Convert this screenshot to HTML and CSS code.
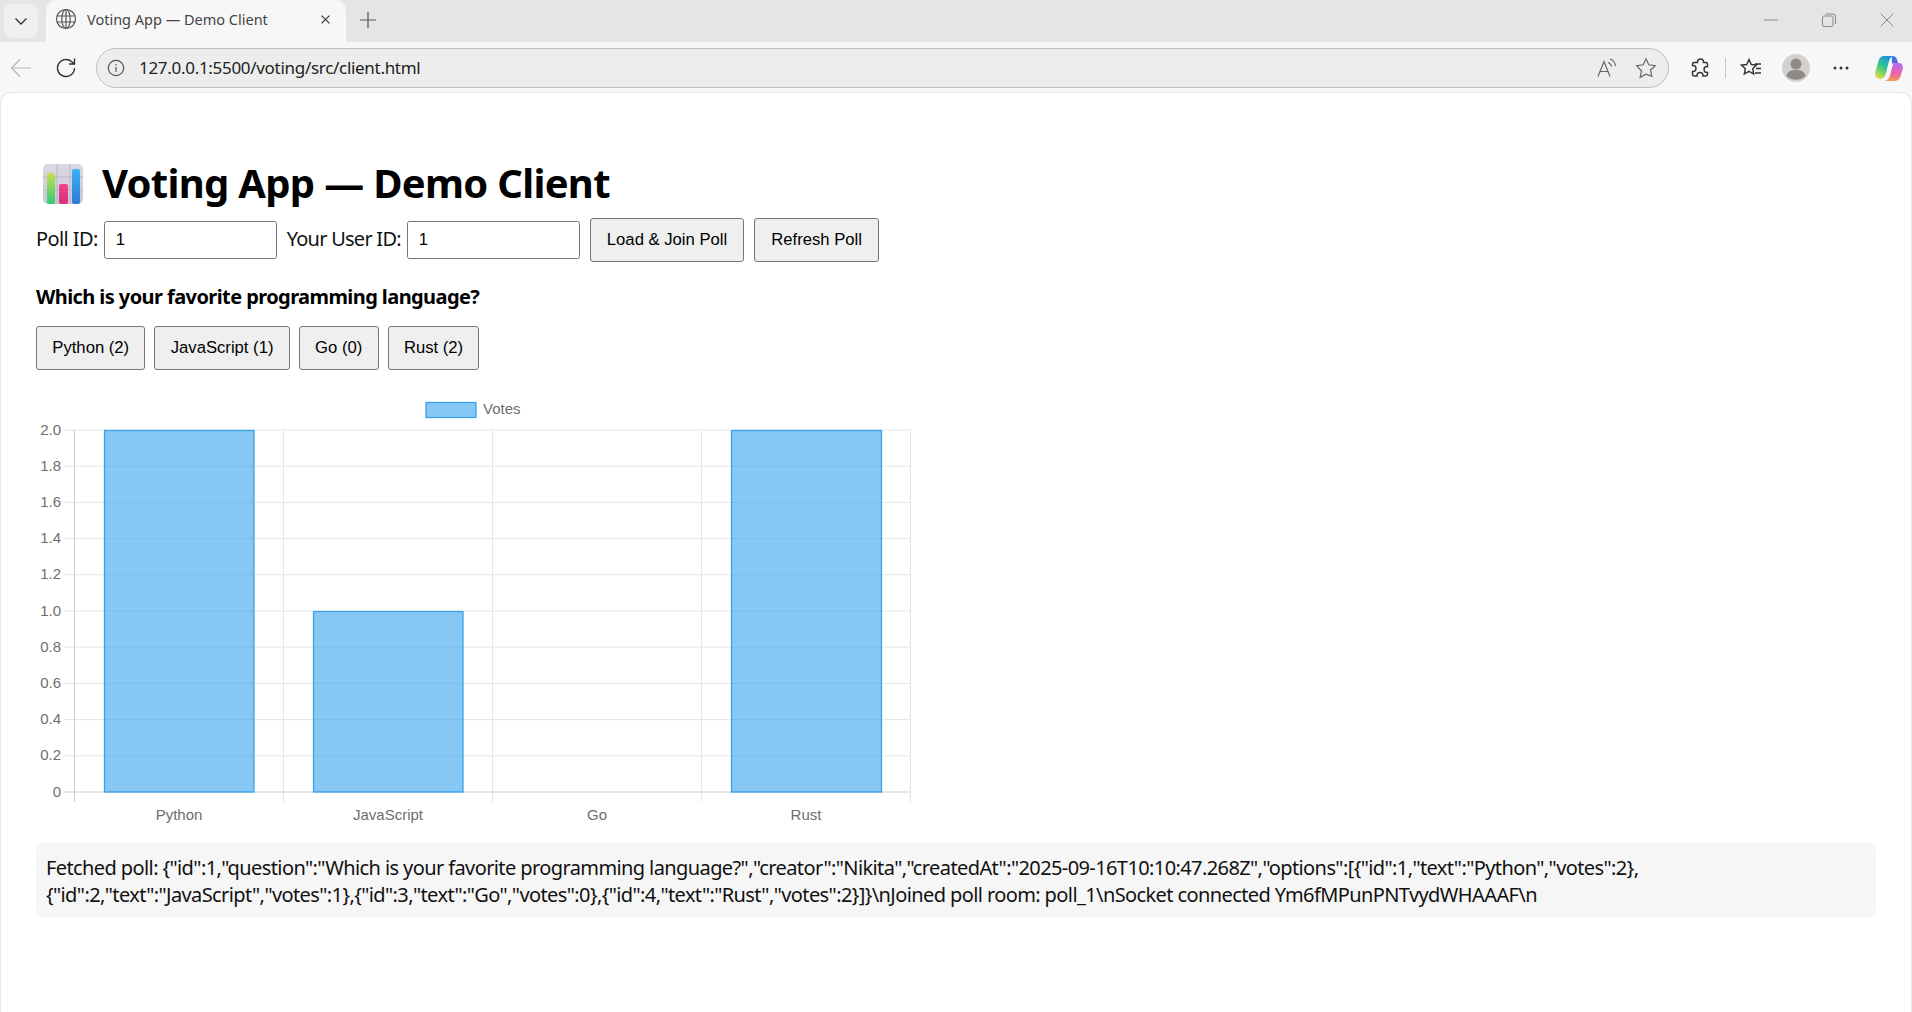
FILE: index.html
```html
<!DOCTYPE html>
<html lang="en">
<head>
<meta charset="utf-8">
<title>Voting App — Demo Client</title>
<link rel="stylesheet" href="styles.css">
</head>
<body>
<div class="browser">
  <header class="tabstrip">
    <button class="tab-menu" aria-label="Tab actions">
      <svg width="16" height="16" viewBox="0 0 16 16" class="ico"><path d="M2.5 5.500 8 11l5.500-5.500"/></svg>
    </button>
    <div class="tab">
      <svg width="22" height="22" viewBox="0 0 22 22" class="ico globe"><circle cx="11" cy="11" r="9.500"/><ellipse cx="11" cy="11" rx="4.200" ry="9.500"/><path d="M11 1.500v19M2 8h18M2 14h18"/></svg>
      <span class="tab-title">Voting App — Demo Client</span>
      <svg width="14" height="14" viewBox="0 0 14 14" class="ico tab-close"><path d="M2 2l10 10M12 2 2 12"/></svg>
    </div>
    <svg width="16" height="16" viewBox="0 0 16 16" class="ico new-tab"><path d="M8 0v16M0 8h16"/></svg>
    <div class="win-controls">
      <svg width="14" height="14" viewBox="0 0 14 14" class="ico win"><path d="M0 7h14"/></svg>
      <svg width="14" height="14" viewBox="0 0 14 14" class="ico win"><rect x=".5" y="3" width="10.500" height="10.500" rx="1.500"/><path d="M3.500 1h7.500a2.500 2.500 0 0 1 2.500 2.500V11"/></svg>
      <svg width="14" height="14" viewBox="0 0 14 14" class="ico win"><path d="M.5.500l13 13M13.500.500l-13 13"/></svg>
    </div>
  </header>
  <nav class="toolbar">
    <svg width="22" height="20" viewBox="0 0 22 20" class="ico back"><path d="M21 10H1.500M10 1.500 1.500 10l8.500 8.500"/></svg>
    <svg width="22" height="22" viewBox="0 0 22 22" class="ico reload"><path d="M19.500 11a8.500 8.500 0 1 1-2.700-6.200L19.500 7M19.500 1.500V7H14"/></svg>
    <div class="address">
      <svg width="18" height="18" viewBox="0 0 18 18" class="ico info"><circle cx="9" cy="9" r="7.700"/><path d="M9 8v5M9 5v1.500"/></svg>
      <span class="url">127.0.0.1:5500/voting/src/client.html</span>
      <span class="spacer"></span>
      <svg width="20" height="20" viewBox="0 0 20 20" class="ico grey"><path d="M1 18.500 7 3.500l6 15M3 13.500h8M11 4.500c2 .7 3.300 2 3.600 4M13 1c3 1 5 3.500 5.500 7"/></svg>
      <svg width="22" height="22" viewBox="0 0 22 22" class="ico grey star"><path d="M11 1.800l2.800 6 6.500.8-4.800 4.400 1.300 6.400L11 17.200l-5.800 3.200 1.300-6.400L1.700 8.600l6.500-.8z"/></svg>
    </div>
    <svg width="20" height="20" viewBox="0 0 20 20" class="ico puzzle"><path d="M7.500 4a3 3 0 0 1 6 0v.5H16a1.500 1.500 0 0 1 1.500 1.500v2.500H17a3 3 0 0 0 0 6h.5v1.500A2 2 0 0 1 15.500 18H13v-.5a3 3 0 0 0-6 0v.5H4.500a2 2 0 0 1-2-2v-2.500H3a3 3 0 0 0 0-6h-.5V6A1.500 1.500 0 0 1 4 4.500h3.500z"/></svg>
    <span class="tool-sep"></span>
    <svg width="22" height="22" viewBox="0 0 22 22" class="ico fav"><path d="M9 2.500l2.300 5 5.200.6-3.800 3.600 1 5.300L9 14.300 4.300 17l1-5.300L1.500 8.100l5.200-.6zM15 7h6M16 11.500h5M15 16h6"/></svg>
    <svg width="28" height="28" viewBox="0 0 28 28" class="avatar"><circle cx="14" cy="14" r="14" fill="#d3d1cd"/><circle cx="14" cy="10" r="5.500" fill="#8f8a85"/><path d="M4.500 22c1-4.500 4.500-6 9.500-6s8.500 1.500 9.500 6a14 14 0 0 1-19 0z" fill="#8f8a85"/></svg>
    <svg width="16" height="4" viewBox="0 0 16 4" class="dots"><circle cx="2" cy="2" r="1.500"/><circle cx="8" cy="2" r="1.500"/><circle cx="14" cy="2" r="1.500"/></svg>
    <svg width="28" height="26" viewBox="0 0 28 26" class="copilot">
      <defs>
        <linearGradient id="cpa" x1="0.700" y1="0" x2="0.200" y2="1"><stop offset="0" stop-color="#1a8fe6"/><stop offset=".5" stop-color="#34c98a"/><stop offset="1" stop-color="#e6dc3c"/></linearGradient>
        <linearGradient id="cpb" x1="0.600" y1="0" x2="0.400" y2="1"><stop offset="0" stop-color="#b06cf0"/><stop offset=".55" stop-color="#ee62a8"/><stop offset="1" stop-color="#f59a4a"/></linearGradient>
        <linearGradient id="cpc" x1="0" y1="0" x2="1" y2="1"><stop offset="0" stop-color="#1a7fe0"/><stop offset="1" stop-color="#7a5ce8"/></linearGradient>
      </defs>
      <path d="M17 1c3 0 4.500 1.500 5.200 4l1 3.500H17z" fill="url(#cpc)"/>
      <path d="M9 1h10c-3 .5-4.500 3-5.300 6L11 18c-.8 3.500-3 6-6 6-4 0-5.500-3.500-4.500-7.500L3.500 6C4.300 3 6 1 9 1z" fill="url(#cpa)"/>
      <path d="M19.500 8h4.500c3 0 4.500 3 3.700 6l-2.400 7.500C24.500 24.300 22.500 26 19.500 26H9.500c3-.5 4.800-2.800 5.500-5.500l2-7.500c.5-2.500 1-5 2.500-5z" fill="url(#cpb)"/>
    </svg>
  </nav>
  <main class="page">
    <h1 class="title">
      <svg width="40" height="40" viewBox="0 0 40 40" class="emoji">
        <defs>
          <linearGradient id="ebg" x1="0" y1="0" x2="0" y2="1"><stop offset="0" stop-color="#ddd8e3"/><stop offset="1" stop-color="#c9c6d6"/></linearGradient>
          <linearGradient id="eg" x1="0" y1="0" x2="0" y2="1"><stop offset="0" stop-color="#c6e04f"/><stop offset="1" stop-color="#35c97a"/></linearGradient>
          <linearGradient id="ep" x1="0" y1="0" x2="0" y2="1"><stop offset="0" stop-color="#f0458a"/><stop offset="1" stop-color="#d92d7a"/></linearGradient>
          <linearGradient id="eb" x1="0" y1="0" x2="0" y2="1"><stop offset="0" stop-color="#39b2f5"/><stop offset="1" stop-color="#2f78d8"/></linearGradient>
        </defs>
        <rect width="40" height="40" rx="5" fill="url(#ebg)"/>
        <path d="M0 13h40M0 26h40M14 0v40M27 0v40" stroke="#b9b5c4" stroke-width="1" fill="none"/>
        <rect x="4" y="9" width="8" height="31" rx="2" fill="url(#eg)"/>
        <rect x="16" y="20" width="9" height="20" rx="2" fill="url(#ep)"/>
        <rect x="29" y="5" width="8" height="35" rx="2" fill="url(#eb)"/>
      </svg>
      <span class="title-text">Voting App — Demo Client</span>
    </h1>
    <div class="controls">
      <label class="field"><span class="field-text tight-a">Poll ID:</span><input class="id-input" type="text" value="1"></label>
      <label class="field"><span class="field-text tight-b">Your User ID:</span><input class="id-input" type="text" value="1"></label>
      <button class="btn">Load &amp; Join Poll</button>
      <button class="btn">Refresh Poll</button>
    </div>
    <h2 class="question">Which is your favorite programming language?</h2>
    <div class="options">
      <button class="btn">Python (2)</button>
      <button class="btn">JavaScript (1)</button>
      <button class="btn">Go (0)</button>
      <button class="btn">Rust (2)</button>
    </div>
    <svg class="chart" width="880" height="434" viewBox="36 395 880 434">
      <rect class="swatch" x="426" y="402.500" width="50" height="15"/>
      <text class="lbl" x="483" y="414">Votes</text>
      <g class="grid">
        <path d="M64 430H910M64 466.200H910M64 502.400H910M64 538.600H910M64 574.800H910M64 611H910M64 647.200H910M64 683.400H910M64 719.600H910M64 755.800H910"/>
        <path d="M283.500 430V802M492.500 430V802M701.500 430V802M910.500 430V802"/>
      </g>
      <g class="axis">
        <path d="M74.500 430V802M64 792H910"/>
      </g>
      <g class="bars">
        <rect x="104.500" y="430.500" width="149.500" height="361.500"/>
        <rect x="313.500" y="611.500" width="149.500" height="180.500"/>
        <rect x="731.500" y="430.500" width="150" height="361.500"/>
      </g>
      <g class="lbl end">
        <text x="61" y="434.500">2.0</text>
        <text x="61" y="471">1.8</text>
        <text x="61" y="507">1.6</text>
        <text x="61" y="543">1.4</text>
        <text x="61" y="579">1.2</text>
        <text x="61" y="616">1.0</text>
        <text x="61" y="652">0.8</text>
        <text x="61" y="688">0.6</text>
        <text x="61" y="724">0.4</text>
        <text x="61" y="760">0.2</text>
        <text x="61" y="797">0</text>
      </g>
      <g class="lbl mid">
        <text x="179" y="820">Python</text>
        <text x="388" y="820">JavaScript</text>
        <text x="597" y="820">Go</text>
        <text x="806" y="820">Rust</text>
      </g>
    </svg>
    <div class="log">Fetched poll: {"id":1,"question":"Which is your favorite programming language?","creator":"Nikita","createdAt":"2025-09-16T10:10:47.268Z","options":[{"id":1,"text":"Python","votes":2},{"id":2,"text":"JavaScript","votes":1},{"id":3,"text":"Go","votes":0},{"id":4,"text":"Rust","votes":2}]}\nJoined poll room: poll_1\nSocket connected Ym6fMPunPNTvydWHAAAF\n</div>
  </main>
</div>
</body>
</html>
```
FILE: styles.css
```css
* { box-sizing: border-box; }
html, body { margin: 0; height: 100%; overflow: hidden; }
body { font-family: "Noto Sans", "Open Sans", sans-serif; color: #000; background: #f7f7f7; }

.browser { display: flex; flex-direction: column; height: 1012px; }

.ico { fill: none; stroke: #333; stroke-width: 1.4; flex: none; }

.tabstrip { display: flex; align-items: center; height: 42px; background: #e5e5e5; flex: none; }
.tab-menu { width: 34px; height: 34px; margin: 0 8px 0 4px; padding: 0; border: 0; border-radius: 8px; background: #efefef; display: flex; align-items: center; justify-content: center; }
.tab { align-self: flex-end; width: 300px; height: 42px; background: #f7f7f7; border-radius: 10px 10px 0 0; display: flex; align-items: center; padding: 0 12px 4px 9px; flex: none; }
.globe { stroke: #555; stroke-width: 1.2; }
.tab-title { margin-left: 10px; font-size: 14.500px; color: #444; flex: 1; white-space: nowrap; }
.tab-close { width: 11px; height: 11px; stroke-width: 1.500; margin-right: 3px; }
.new-tab { margin: -3px 0 0 14px; stroke: #555; stroke-width: 1.200; }
.win-controls { margin-left: auto; display: flex; gap: 44px; padding-right: 18px; margin-top: -2px; }
.win { stroke: #888; stroke-width: 1; }

.toolbar { display: flex; align-items: center; height: 51px; padding: 0 9px 0 10px; background: #f7f7f7; flex: none; }
.back { stroke: #b5b5b5; stroke-width: 1.200; }
.reload { margin-left: 23px; stroke-width: 1.400; }
.address { display: flex; align-items: center; flex: none; margin-left: 19px; width: 1573px; height: 40px; padding: 0 11px 0 10px; border: 1px solid #bdbdbd; border-radius: 20px; background: #ededed; }
.info { stroke: #555; stroke-width: 1.200; }
.url { margin-left: 14px; font-size: 17px; letter-spacing: -.3px; color: #222; white-space: nowrap; }
.spacer { flex: 1; }
.star { margin-left: 18px; }
.grey { stroke: #666; stroke-width: 1.200; }
.puzzle { margin-left: 21px; stroke-width: 1.400; }
.tool-sep { width: 1px; height: 20px; margin-left: 15px; background: #c8c8c8; flex: none; }
.fav { margin-left: 14px; }
.avatar { margin-left: 20px; flex: none; }
.dots { margin-left: 23px; fill: #333; flex: none; }
.copilot { margin-left: 26px; flex: none; }

.page { flex: 1; margin: 0 1px; padding: 69px 35px 0; background: #fff; border-radius: 10px 10px 0 0; box-shadow: 0 0 0 1px #e8e8e8; }
.title { display: flex; align-items: center; gap: 19px; height: 44px; margin: 0; padding-left: 7px; font-size: 40px; font-weight: 700; line-height: 44px; letter-spacing: -.7px; white-space: nowrap; }
.title-text { padding-bottom: 2px; }
.emoji { flex: none; }

.controls { display: flex; align-items: center; gap: 10px; margin-top: 12px; height: 44px; }
.field { display: flex; align-items: center; gap: 6px; font-size: 20px; color: #111; white-space: nowrap; }
.field-text { padding-bottom: 4px; }
.tight-a { letter-spacing: -.6px; }
.tight-b { letter-spacing: -.75px; }
.id-input { width: 173px; height: 38px; padding: 0 11px; border: 1px solid #767676; border-radius: 2.500px; background: #fff; font: 16.670px "Liberation Sans", Arial, sans-serif; color: #000; outline: none; }
.btn { height: 44px; padding: 0 16px; border: 1px solid #767676; border-radius: 3px; background: #efefef; font: 16.670px "Liberation Sans", Arial, sans-serif; color: #000; white-space: nowrap; }

.question { margin: 20px 0 0; height: 30px; font-size: 20px; font-weight: 700; line-height: 30px; letter-spacing: -.58px; }
.options { display: flex; gap: 9px; margin-top: 14px; }
.options .btn { padding: 0 15.300px; }

.chart { display: block; margin-top: 25px; font-family: "Liberation Sans", Arial, sans-serif; }
.swatch { fill: rgba(54,162,235,.6); stroke: #36a2eb; stroke-width: 1.250; }
.lbl { font-size: 15px; fill: #6e6e6e; }
.end { text-anchor: end; }
.mid { text-anchor: middle; }
.grid path { fill: none; stroke: #e6e6e6; stroke-width: 1; }
.axis path { fill: none; stroke: #cfcfcf; stroke-width: 1; }
.bars rect { fill: rgba(54,162,235,.6); stroke: #36a2eb; stroke-width: 1.250; }

.log { margin-top: 14px; padding: 11px 10px 9px; height: 74px; background: #f6f6f6; border-radius: 8px; font-size: 20px; line-height: 27px; letter-spacing: -.6px; word-break: break-word; color: #111; }
```
